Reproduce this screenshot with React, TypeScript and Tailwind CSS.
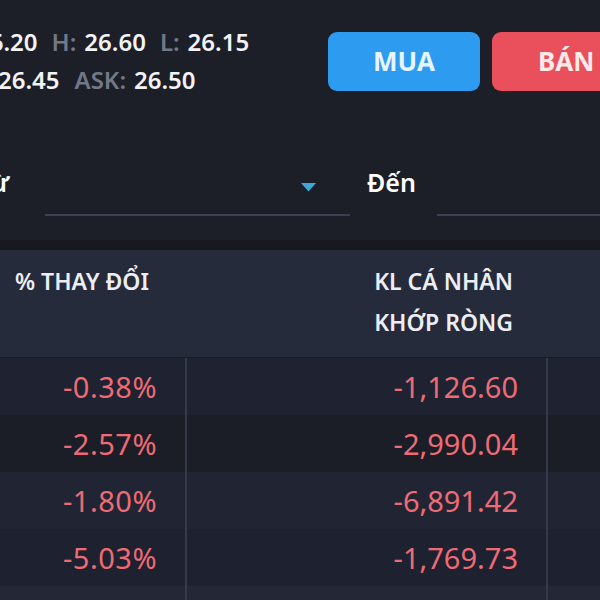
import React from 'react'

const rows = [
  { change: '-0.38%', net: '-1,126.60', bg: 'bg-[#1f2230]' },
  { change: '-2.57%', net: '-2,990.04', bg: 'bg-[#1b1d27]' },
  { change: '-1.80%', net: '-6,891.42', bg: 'bg-[#212533]' },
  { change: '-5.03%', net: '-1,769.73', bg: 'bg-[#1e2130]' },
  { change: '-3.12%', net: '-2,415.88', bg: 'bg-[#232736]' },
]

function Quote({ label, value }: { label: string; value: string }) {
  return (
    <span className="flex gap-[8px] shrink-0">
      {label && <span className="text-[#737888]">{label}</span>}
      <span className="text-[#f2f3f6]">{value}</span>
    </span>
  )
}

export default function App() {
  return (
    <div className="w-[600px] h-[600px] overflow-hidden bg-[#1c1f28] font-['Noto_Sans',sans-serif]">
      {/* quote + actions */}
      <div className="flex h-[120px] items-start">
        <div className="-ml-[24px] w-[352px] shrink-0 pt-[23px] text-[24px] font-semibold leading-[38px]">
          <div className="flex gap-[14px] whitespace-nowrap">
            <Quote label="" value="26.20" />
            <Quote label="H:" value="26.60" />
            <Quote label="L:" value="26.15" />
          </div>
          <div className="flex gap-[15px] whitespace-nowrap pl-[22px]">
            <Quote label="" value="26.45" />
            <Quote label="ASK:" value="26.50" />
          </div>
        </div>
        <div className="mt-[32px] flex gap-[12px] shrink-0">
          <button className="w-[152px] h-[59px] rounded-[9px] bg-[#2d9bf0] text-[26px] font-bold text-[#e6f5ff]">
            MUA
          </button>
          <button className="w-[152px] h-[59px] rounded-[9px] bg-[#e9505c] text-[26px] font-bold text-[#fbeaea] text-left pl-[46px]">
            BÁN
          </button>
        </div>
      </div>

      {/* date filter */}
      <div className="flex h-[120px] items-start pt-[47px] text-[25px] font-semibold leading-[30px] text-white">
        <div className="w-[45px] shrink-0 overflow-hidden">
          <span className="-ml-[22px] block whitespace-nowrap">Từ</span>
        </div>
        <div className="flex h-[49px] w-[305px] shrink-0 items-center justify-end border-b-2 border-[#3a4152] pr-[34px] pb-[6px]">
          <svg width="15" height="9" viewBox="0 0 15 9">
            <path d="M0 0 H15 L7.5 8.5 Z" fill="#3fa7d6" />
          </svg>
        </div>
        <div className="ml-[17px] w-[70px] shrink-0">Đến</div>
        <div className="h-[49px] flex-1 border-b-2 border-[#3a4152]" />
      </div>

      {/* table */}
      <div className="h-[10px] bg-[#17191f]" />
      <div className="flex h-[107px] bg-[#262b3b] text-[23px] font-semibold leading-[41px] text-[#eceef3]">
        <div className="w-[187px] shrink-0 pl-[15px] pt-[11px]">% THAY ĐỔI</div>
        <div className="w-[361px] shrink-0 pr-[35px] pt-[11px] text-right">
          KL CÁ NHÂN
          <br />
          KHỚP RÒNG
        </div>
        <div className="flex-1" />
      </div>
      <div className="h-px bg-[#171a22]" />
      {rows.map((r) => (
        <div key={r.change} className={`flex h-[57px] ${r.bg} text-[29px] leading-[57px] text-[#ee6b74]`}>
          <div className="w-[187px] shrink-0 border-r-2 border-[#353a4a] pr-[28px] text-right tracking-[0.5px]">
            {r.change}
          </div>
          <div className="w-[361px] shrink-0 border-r-2 border-[#353a4a] pr-[28px] text-right">{r.net}</div>
          <div className="flex-1" />
        </div>
      ))}
    </div>
  )
}
